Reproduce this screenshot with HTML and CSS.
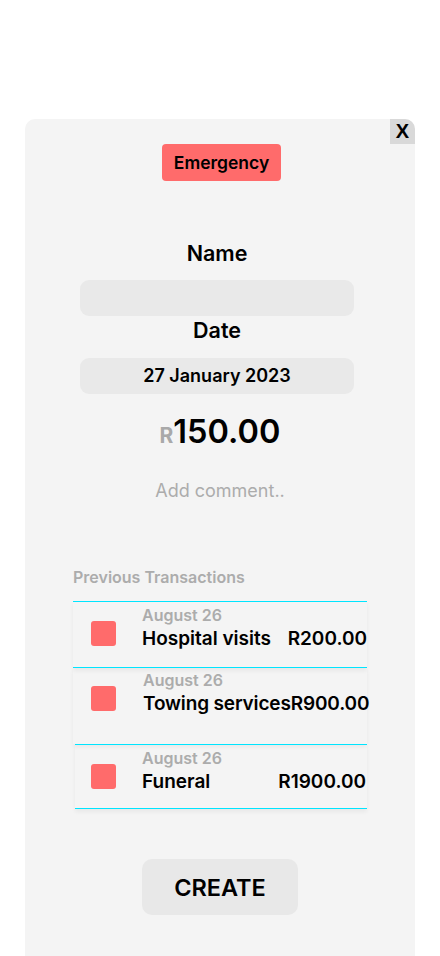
FILE: index.html
```html
<!DOCTYPE html>
<html>
<head>
<meta charset="utf-8">
<link rel="stylesheet" href="styles.css">
</head>
<body>
<div class="card">
  <button class="close">X</button>
  <div class="badge">Emergency</div>
  <div class="field">
    <div class="label label-name">Name</div>
    <div class="input"></div>
    <div class="label label-date">Date</div>
    <div class="input">27 January 2023</div>
  </div>
  <div class="amount"><span class="cur">R</span><span class="val">150.00</span></div>
  <div class="comment">Add comment..</div>
  <div class="prev-title">Previous Transactions</div>
  <div class="list">
    <div class="row row1">
      <div class="sq"></div>
      <div class="info">
        <div class="date">August 26</div>
        <div class="line"><span>Hospital visits</span><span>R200.00</span></div>
      </div>
    </div>
    <div class="row row2">
      <div class="sq"></div>
      <div class="info">
        <div class="date">August 26</div>
        <div class="line"><span>Towing services</span><span>R900.00</span></div>
      </div>
    </div>
    <div class="row row3">
      <div class="sq"></div>
      <div class="info">
        <div class="date">August 26</div>
        <div class="line"><span>Funeral</span><span>R1900.00</span></div>
      </div>
    </div>
  </div>
  <button class="create">CREATE</button>
</div>
</body>
</html>
```
FILE: styles.css
```css
* { box-sizing: border-box; }
html, body { margin: 0; padding: 0; background: #fff; overflow: hidden; }
body { font-family: Inter, "Noto Sans", sans-serif; color: #000; }

.card {
  position: relative;
  margin: 119px 0 0 25px;
  width: 390px;
  height: 880px;
  background: #f4f4f4;
  border-radius: 10px;
  overflow: hidden;
  display: flex;
  flex-direction: column;
  padding-top: 25px;
}

.close {
  position: absolute;
  top: 0;
  right: 0;
  width: 25px;
  height: 25px;
  border: 0;
  padding: 0;
  background: #d9d9d9;
  font-family: "Liberation Sans", Arial, sans-serif;
  font-weight: 700;
  font-size: 20px;
  line-height: 25px;
  color: #000;
}

.badge {
  align-self: center;
  margin-left: 3px;
  width: 119px;
  height: 37px;
  background: #ff6b6b;
  border-radius: 4px;
  font-weight: 600;
  font-size: 17.5px;
  line-height: 37px;
  text-align: center;
}

.field {
  margin-left: 55px;
  width: 274px;
  display: flex;
  flex-direction: column;
  margin-top: 60px;
}
.label {
  text-align: center;
  font-size: 21.5px;
  font-weight: 600;
  line-height: 24px;
}
.label-date { margin-top: 2px; }
.input {
  margin-top: 15px;
  height: 36px;
  border-radius: 9px;
  background: #e9e9e9;
  text-align: center;
  font-size: 18px;
  font-weight: 600;
  line-height: 36px;
}
.label-date + .input { margin-top: 16px; }

.amount {
  margin-top: 18px;
  text-align: center;
  line-height: 40px;
  height: 40px;
}
.cur { font-size: 21px; font-weight: 700; color: #a9a9a9; }
.val { font-size: 32.5px; font-weight: 600; }

.comment {
  margin-top: 28px;
  text-align: center;
  font-size: 18px;
  color: #acacac;
  line-height: 22px;
}

.prev-title {
  margin: 66px 0 0 48px;
  font-size: 16px;
  font-weight: 600;
  color: #acacac;
  line-height: 18px;
}

.list {
  margin: 15px 0 0 48px;
  width: 294px;
  display: flex;
  flex-direction: column;
}
.row {
  display: flex;
  align-items: flex-start;
  padding-left: 18px;
  box-shadow: 0 3px 4px rgba(0, 0, 0, 0.05);
}
.row1 {
  border-top: 1px solid #00e5ff;
  border-bottom: 1px solid #00e5ff;
  padding-top: 4px;
  height: 67px;
}
.row2 {
  padding-top: 3px;
  height: 76px;
}
.row2 .info { margin-left: 27px; }
.row2 .line { letter-spacing: -0.15px; }
.row3 {
  margin-left: 2px;
  padding-left: 16px;
  border-top: 1px solid #00e5ff;
  border-bottom: 1px solid #00e5ff;
  padding-top: 4px;
  height: 65px;
}
.sq {
  width: 25px;
  height: 25px;
  border-radius: 3px;
  background: #ff6b6b;
  margin-top: 15px;
  flex: none;
}
.info {
  margin-left: 26px;
  flex: 1;
  min-width: 0;
}
.date {
  font-size: 16px;
  font-weight: 600;
  color: #acacac;
  line-height: 18px;
}
.line {
  margin-top: 4px;
  display: flex;
  justify-content: space-between;
  font-size: 19px;
  font-weight: 600;
  line-height: 22px;
  white-space: nowrap;
}
.row3 .line { padding-right: 1px; }

.create {
  align-self: center;
  margin-top: 50px;
  width: 156px;
  height: 56px;
  border: 0;
  border-radius: 10px;
  background: #e8e8e8;
  font-family: Inter, "Noto Sans", sans-serif;
  font-size: 23.5px;
  font-weight: 600;
  color: #000;
}
```
